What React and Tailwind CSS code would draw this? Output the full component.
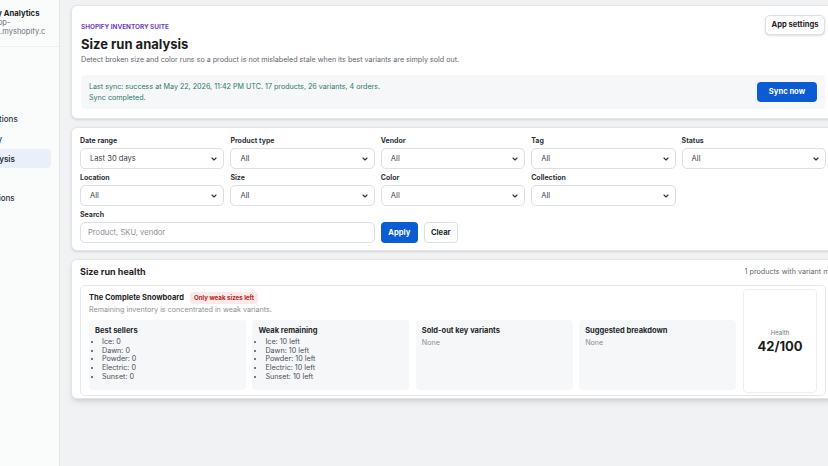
import React from 'react';
import { ChevronDown } from 'lucide-react';

const navItems = [
  { label: 'Home' },
  { label: 'Reports' },
  { label: 'Stock actions' },
  { label: 'Inventory' },
  { label: 'Run analysis', active: true },
  { label: 'Alerts' },
  { label: 'Notifications' },
];

const filters = [
  { label: 'Date range', value: 'Last 30 days' },
  { label: 'Product type', value: 'All' },
  { label: 'Vendor', value: 'All' },
  { label: 'Tag', value: 'All' },
  { label: 'Status', value: 'All' },
  { label: 'Location', value: 'All' },
  { label: 'Size', value: 'All' },
  { label: 'Color', value: 'All' },
  { label: 'Collection', value: 'All' },
];

const boxes = [
  { title: 'Best sellers', items: ['Ice: 0', 'Dawn: 0', 'Powder: 0', 'Electric: 0', 'Sunset: 0'] },
  {
    title: 'Weak remaining',
    items: ['Ice: 10 left', 'Dawn: 10 left', 'Powder: 10 left', 'Electric: 10 left', 'Sunset: 10 left'],
  },
  { title: 'Sold-out key variants', items: [] },
  { title: 'Suggested breakdown', items: [] },
];

const Select = ({ value }) => (
  <div className="flex h-[21px] items-center justify-between rounded-[5px] border border-[#dcdfe3] bg-white pl-[9px] pr-[5px] text-[7.6px] text-[#3d4147]">
    <span>{value}</span>
    <ChevronDown className="h-[8px] w-[8px] text-[#333]" strokeWidth={3.5} />
  </div>
);

const Sidebar = () => (
  <aside className="w-[60px] shrink-0 overflow-hidden border-r border-[#e4e6e9] bg-[#fafbfb]">
    <div className="-ml-[46px] w-[105px]">
      <div className="border-b border-[#eeeff1] pb-[10px] pl-[12px] pr-[14px] pt-[9px]">
        <div className="whitespace-nowrap text-[7.7px] font-bold leading-[10px] text-[#202326]">Inventory Analytics</div>
        <div className="whitespace-nowrap text-[7.5px] leading-[8.5px] text-[#6b7078]">demo-shop-</div>
        <div className="overflow-hidden whitespace-nowrap text-[7.5px] leading-[8.5px] text-[#6b7078]">
          dev-store.myshopify.com
        </div>
      </div>
      <nav className="mt-[22px] flex flex-col pl-[8px] pr-[8px]">
        {navItems.map((item) => (
          <div
            key={item.label}
            className={
              item.active
                ? 'flex h-[19px] items-center whitespace-nowrap rounded-[4px] bg-[#e9f0fa] pl-[4px] text-[8px] font-semibold text-[#1f2a37]'
                : 'flex h-[20px] items-center whitespace-nowrap pl-[4px] text-[8px] font-medium text-[#2e3338]'
            }
          >
            {item.label}
          </div>
        ))}
      </nav>
    </div>
  </aside>
);

export default function App() {
  return (
    <div className="flex h-[466px] w-[828px] overflow-hidden bg-[#f1f2f4] font-['Inter',sans-serif]">
      <Sidebar />

      <main className="flex w-[786px] shrink-0 flex-col px-[11px] pt-[5px]">
        {/* header */}
        <section className="rounded-[6px] border border-[#e3e5e8] bg-white px-[9px] pb-[9px] pt-[9px] shadow-sm">
          <div className="flex items-start justify-between">
            <div className="pt-[7px]">
              <div className="text-[6.4px] font-bold uppercase leading-[10px] text-[#6e3fbf]">
                Shopify Inventory Suite
              </div>
              <h1 className="mt-[3px] text-[13px] font-bold leading-[18px] text-[#1b1d20]">Size run analysis</h1>
              <p className="mt-[2px] text-[7.15px] leading-[10px] text-[#60656c]">
                Detect broken size and color runs so a product is not mislabeled stale when its best variants are
                simply sold out.
              </p>
            </div>
            <button className="h-[20px] w-[60px] rounded-[5px] border border-[#dcdfe3] bg-white text-[7.6px] font-bold text-[#1f2226] shadow-sm">
              App settings
            </button>
          </div>
          <div className="mt-[10px] flex items-center justify-between rounded-[4px] bg-[#f5f7f9] py-[6px] pl-[8px] pr-[8px]">
            <div className="text-[7.15px] leading-[11px] text-[#2c7a67]">
              <div>Last sync: success at May 22, 2026, 11:42 PM UTC. 17 products, 26 variants, 4 orders.</div>
              <div>Sync completed.</div>
            </div>
            <button className="h-[20px] w-[60px] rounded-[4px] bg-[#0b5bd3] text-[7.6px] font-bold text-white">
              Sync now
            </button>
          </div>
        </section>

        {/* filters */}
        <section className="mt-[8px] rounded-[6px] border border-[#e3e5e8] bg-white px-[8px] pb-[7px] pt-[8px] shadow-sm">
          <div className="grid grid-cols-5 gap-x-[6px] gap-y-[4px]">
            {filters.map((f) => (
              <div key={f.label} className="flex flex-col gap-[2px]">
                <label className="text-[7px] font-bold leading-[10px] text-[#2f3338]">{f.label}</label>
                <Select value={f.value} />
              </div>
            ))}
            <div className="col-span-2 flex flex-col gap-[2px]">
              <label className="text-[7px] font-bold leading-[10px] text-[#2f3338]">Search</label>
              <div className="flex h-[21px] items-center rounded-[5px] border border-[#dcdfe3] bg-white pl-[7px] text-[7.6px] text-[#8d9198]">
                Product, SKU, vendor
              </div>
            </div>
            <div className="col-span-3 flex items-end gap-[6px]">
              <button className="h-[21px] w-[37px] rounded-[4px] bg-[#0b5bd3] text-[7.6px] font-bold text-white">
                Apply
              </button>
              <button className="h-[21px] w-[34px] rounded-[4px] border border-[#dcdfe3] bg-white text-[7.6px] font-bold text-[#25292d]">
                Clear
              </button>
            </div>
          </div>
        </section>

        {/* size run health */}
        <section className="mt-[8px] rounded-[6px] border border-[#e3e5e8] bg-white px-[8px] pb-[2px] pt-[7px] shadow-md">
          <div className="flex items-center justify-between">
            <h2 className="text-[9px] font-bold leading-[10px] text-[#1f2226]">Size run health</h2>
            <span className="-mr-[30px] whitespace-nowrap text-[7.2px] leading-[10px] text-[#62666d]">
              1 products with variant mismatch
            </span>
          </div>

          <div className="mt-[8px] flex gap-[7px] rounded-[5px] border border-[#e6e8eb] bg-white px-[8px] pb-[5px] pt-[6px]">
            <div className="flex-1">
              <div className="flex h-[12px] items-center gap-[6px]">
                <span className="text-[7.5px] font-bold text-[#1f2226]">The Complete Snowboard</span>
                <span className="rounded-[3px] bg-[#fde9e7] px-[4px] text-[6.2px] font-bold leading-[12px] text-[#b3261e]">
                  Only weak sizes left
                </span>
              </div>
              <p className="text-[7.2px] leading-[11px] text-[#8a8f96]">
                Remaining inventory is concentrated in weak variants.
              </p>
              <div className="mt-[5px] grid grid-cols-4 gap-[6.5px]">
                {boxes.map((b) => (
                  <div key={b.title} className="h-[70px] rounded-[4px] bg-[#f6f7f9] px-[6px] pt-[6px]">
                    <div className="text-[7.5px] font-bold leading-[10px] text-[#24282c]">{b.title}</div>
                    {b.items.length ? (
                      <ul className="mt-[2px] list-disc pl-[7px] text-[7.2px] leading-[8.7px] text-[#4b5057]">
                        {b.items.map((it) => (
                          <li key={it}>{it}</li>
                        ))}
                      </ul>
                    ) : (
                      <div className="mt-[2px] text-[7.2px] leading-[10px] text-[#8a8f96]">None</div>
                    )}
                  </div>
                ))}
              </div>
            </div>
            <div className="-mb-[3px] -mt-[3px] flex w-[74px] flex-col items-center justify-center rounded-[4px] border border-[#eceef0] bg-white">
              <div className="text-[6px] leading-[9px] text-[#6f747b]">Health</div>
              <div className="text-[13px] font-bold leading-[18px] text-[#1b1d20]">42/100</div>
            </div>
          </div>
        </section>
      </main>
    </div>
  );
}
